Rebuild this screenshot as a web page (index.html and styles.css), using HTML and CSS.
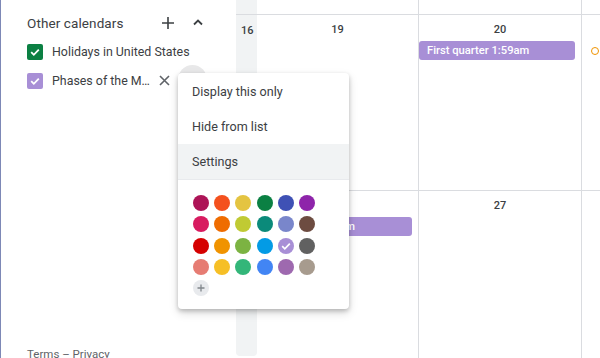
FILE: index.html
```html
<!DOCTYPE html>
<html>
<head>
<meta charset="utf-8">
<link rel="stylesheet" href="styles.css">
</head>
<body>
<div class="app">
  <aside class="sidebar">
    <div class="section-head">
      <span class="section-title">Other calendars</span>
      <span class="head-icons">
        <svg class="icon-plus" width="14" height="14" viewBox="0 0 14 14"><path d="M7 1v12M1 7h12" stroke="#3c4043" stroke-width="1.6" fill="none"/></svg>
        <svg class="icon-chev" width="12" height="8" viewBox="0 0 12 8"><path d="M2 6.5l4-4 4 4" stroke="#3c4043" stroke-width="1.8" fill="none"/></svg>
      </span>
    </div>
    <div class="cal-row">
      <span class="check green"><svg width="12" height="12" viewBox="0 0 12 12"><path d="M2.2 6.2l2.6 2.6 5-5.2" stroke="#fff" stroke-width="1.8" fill="none"/></svg></span>
      <span class="cal-name">Holidays in United States</span>
    </div>
    <div class="cal-row">
      <span class="check lavender"><svg width="12" height="12" viewBox="0 0 12 12"><path d="M2.2 6.2l2.6 2.6 5-5.2" stroke="#fff" stroke-width="1.8" fill="none"/></svg></span>
      <span class="cal-name">Phases of the M…</span>
      <svg class="icon-x" width="11" height="11" viewBox="0 0 11 11"><path d="M1 1l9 9M10 1l-9 9" stroke="#5f6368" stroke-width="1.6" fill="none"/></svg>
    </div>
    <div class="sidebar-spacer"></div>
    <div class="footer">Terms – Privacy</div>
  </aside>

  <div class="week-col">
    <div class="week-top"></div>
    <div class="week-num">16</div>
  </div>

  <main class="grid">
    <div class="cell top"></div>
    <div class="cell top"></div>
    <div class="cell top"></div>

    <div class="cell">
      <div class="day">19</div>
    </div>
    <div class="cell">
      <div class="day">20</div>
      <div class="event">First quarter 1:59am</div>
    </div>
    <div class="cell">
      <div class="day">&nbsp;</div>
      <span class="moon-dot"></span>
    </div>

    <div class="cell">
      <div class="day">&nbsp;</div>
      <div class="event">Full moon 1:40am</div>
    </div>
    <div class="cell">
      <div class="day">27</div>
    </div>
    <div class="cell"></div>
  </main>

  <div class="hover-circle"></div>

  <div class="menu">
    <div class="menu-item">Display this only</div>
    <div class="menu-item">Hide from list</div>
    <div class="menu-item active">Settings</div>
    <div class="menu-divider"></div>
    <div class="swatches">
      <span class="sw" style="background:#ad1457"></span>
      <span class="sw" style="background:#f4511e"></span>
      <span class="sw" style="background:#e4c441"></span>
      <span class="sw" style="background:#0b8043"></span>
      <span class="sw" style="background:#3f51b5"></span>
      <span class="sw" style="background:#8e24aa"></span>
      <span class="sw" style="background:#d81b60"></span>
      <span class="sw" style="background:#ef6c00"></span>
      <span class="sw" style="background:#c0ca33"></span>
      <span class="sw" style="background:#0b8a7a"></span>
      <span class="sw" style="background:#7986cb"></span>
      <span class="sw" style="background:#6d4c41"></span>
      <span class="sw" style="background:#d50000"></span>
      <span class="sw" style="background:#f09300"></span>
      <span class="sw" style="background:#7cb342"></span>
      <span class="sw" style="background:#039be5"></span>
      <span class="sw sel" style="background:#a88fd6"><svg width="12" height="12" viewBox="0 0 12 12"><path d="M2.2 6.2l2.6 2.6 5-5.2" stroke="#fff" stroke-width="1.7" fill="none"/></svg></span>
      <span class="sw" style="background:#616161"></span>
      <span class="sw" style="background:#e67c73"></span>
      <span class="sw" style="background:#f6bf26"></span>
      <span class="sw" style="background:#33b679"></span>
      <span class="sw" style="background:#4285f4"></span>
      <span class="sw" style="background:#9e69af"></span>
      <span class="sw" style="background:#a79b8e"></span>
      <span class="sw add"><svg width="10" height="10" viewBox="0 0 10 10"><path d="M5 1.5v7M1.5 5h7" stroke="#80868b" stroke-width="1.3" fill="none"/></svg></span>
    </div>
  </div>
</div>
</body>
</html>
```

FILE: styles.css
```css
* { box-sizing: border-box; }
html, body { margin: 0; padding: 0; }
body {
  width: 600px;
  height: 358px;
  overflow: hidden;
  background: #fff;
  font-family: Roboto, "Liberation Sans", Arial, sans-serif;
  color: #3c4043;
}
.app {
  position: relative;
  display: flex;
  width: 600px;
  height: 358px;
}
.sidebar {
  width: 236px;
  flex: none;
  border-left: 1px solid #7d88b6;
  padding: 0 0 0 26px;
  display: flex;
  flex-direction: column;
}
.section-head {
  display: flex;
  align-items: center;
  height: 22px;
  margin-top: 12px;
}
.section-title {
  font-size: 13.5px;
  color: #3c4043;
  letter-spacing: 0.1px;
}
.head-icons {
  display: flex;
  align-items: center;
  margin-left: 36px;
}
.icon-plus { margin-left: 1px; }
.icon-chev { margin-left: 17px; margin-top: -2px; }
.section-head + .cal-row { margin-top: 3px; }
.cal-row {
  display: flex;
  align-items: center;
  height: 29px;
}
.check {
  width: 16px;
  height: 16px;
  border-radius: 2px;
  display: flex;
  align-items: center;
  justify-content: center;
  flex: none;
}
.check.green { background: #0b8043; }
.check.lavender { background: #a88fd6; }
.cal-name {
  font-size: 12.4px;
  margin-left: 9px;
  color: #3c4043;
  white-space: nowrap;
}
.icon-x { margin-left: 9px; }
.sidebar-spacer { flex: 1; }
.footer {
  font-size: 11.5px;
  color: #5f6368;
  height: 12px;
  line-height: 16px;
  overflow: visible;
}
.week-col {
  width: 21px;
  flex: none;
  height: 356px;
  background: #f1f3f4;
  border-radius: 0 0 4px 4px;
}
.week-top {
  height: 15px;
  border-bottom: 1px solid #dadce0;
}
.week-num {
  font-size: 11px;
  font-weight: 500;
  color: #3c4043;
  padding: 9px 0 0 5px;
}
.grid {
  flex: 1;
  display: grid;
  grid-template-columns: 162px 163px 1fr;
  grid-template-rows: 15px 176px 1fr;
}
.cell {
  border-right: 1px solid #dadce0;
  border-bottom: 1px solid #dadce0;
  position: relative;
}
.cell:nth-child(3n) { border-right: none; }
.cell:nth-child(n+7) { border-bottom: none; }
.cell.top { border-bottom: 1px solid #dadce0; }
.day {
  text-align: center;
  font-size: 11px;
  font-weight: 500;
  color: #3c4043;
  padding-top: 8px;
  height: 26px;
}
.event {
  margin: 0 6px 0 0;
  height: 19px;
  border-radius: 3px;
  background: #a88fd6;
  color: #fff;
  font-size: 11.2px;
  font-weight: 500;
  line-height: 19px;
  padding-left: 8px;
  white-space: nowrap;
  overflow: hidden;
}
.moon-dot {
  position: absolute;
  left: 9px;
  top: 32px;
  width: 8px;
  height: 8px;
  border-radius: 50%;
  border: 1.5px solid #f09300;
}
.hover-circle {
  position: absolute;
  left: 178px;
  top: 65px;
  width: 29px;
  height: 29px;
  border-radius: 50%;
  background: #e8e8e9;
}
.menu {
  position: absolute;
  left: 178px;
  top: 73px;
  width: 171px;
  height: 236px;
  background: #fff;
  border-radius: 4px;
  box-shadow: 0 2px 4px rgba(0,0,0,0.2), 0 4px 10px rgba(0,0,0,0.15);
  padding-top: 1px;
}
.menu-item {
  height: 35px;
  line-height: 35px;
  padding-left: 14px;
  font-size: 12.6px;
  color: #3c4043;
}
.menu-item.active { background: #f1f3f4; }
.menu-divider {
  height: 1px;
  background: #e8eaed;
}
.swatches {
  display: grid;
  grid-template-columns: repeat(6, 16px);
  gap: 5.3px;
  padding: 15px 0 0 14.7px;
}
.sw {
  width: 16px;
  height: 16px;
  border-radius: 50%;
  display: flex;
  align-items: center;
  justify-content: center;
}
.sw.add { background: #e8eaed; }
```
